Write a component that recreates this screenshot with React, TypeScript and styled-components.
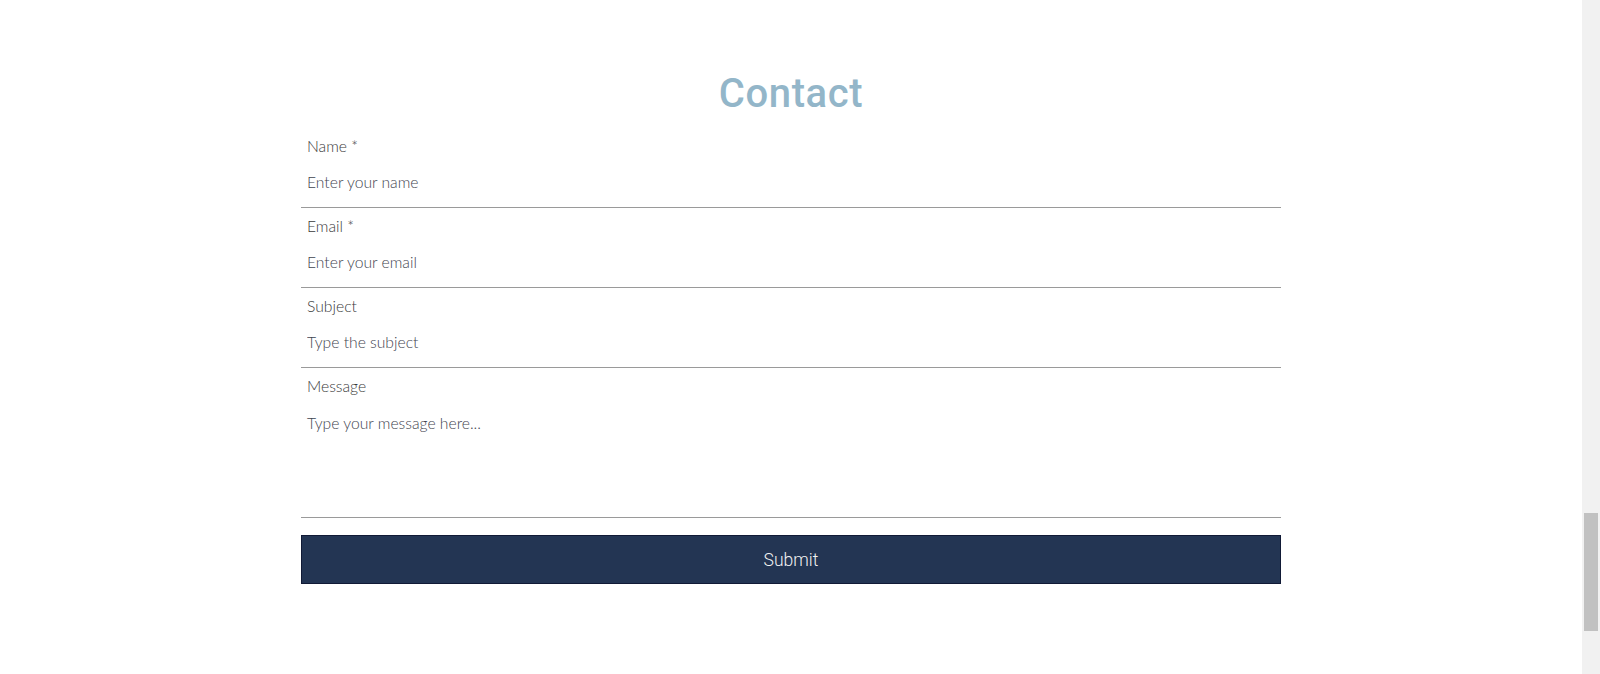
import styled, { createGlobalStyle } from 'styled-components'

const GlobalStyle = createGlobalStyle`
  html, body {
    margin: 0;
    padding: 0;
    background: #ffffff;
    overflow: hidden;
  }
  * {
    box-sizing: border-box;
  }
`

const Page = styled.div`
  display: flex;
  width: 100%;
  height: 674px;
`

const Main = styled.main`
  flex: 1;
  display: flex;
  flex-direction: column;
  align-items: center;
`

const Title = styled.h1`
  margin: 66px 0 0;
  height: 62px;
  font-family: 'Roboto', 'Liberation Sans', sans-serif;
  font-weight: 500;
  font-size: 40px;
  line-height: 56px;
  letter-spacing: 0.6px;
  color: #93b6c9;
`

const Form = styled.form`
  width: 980px;
  display: flex;
  flex-direction: column;
`

const Field = styled.div`
  display: flex;
  flex-direction: column;
  padding-top: 8px;
  border-bottom: 1px solid #9a9a9a;
`

const Label = styled.label`
  font-family: 'Lato', 'Open Sans', sans-serif;
  font-weight: 300;
  font-size: 15.7px;
  line-height: 20px;
  color: #3a3a3a;
  padding-left: 6px;
`

const Input = styled.input`
  height: 51px;
  border: none;
  outline: none;
  padding: 0 6px;
  font-family: 'Lato', 'Open Sans', sans-serif;
  font-weight: 300;
  font-size: 15.7px;
  color: #333;
  background: transparent;

  &::placeholder {
    color: #3f4550;
  }
`

const TextArea = styled.textarea`
  height: 121px;
  border: none;
  outline: none;
  resize: none;
  padding: 17px 6px 0;
  font-family: 'Lato', 'Open Sans', sans-serif;
  font-weight: 300;
  font-size: 15.7px;
  line-height: 20px;
  color: #333;
  background: transparent;

  &::placeholder {
    color: #3f4550;
  }
`

const SubmitButton = styled.button`
  margin-top: 17px;
  height: 49px;
  background-color: #233553;
  border: 1px solid #111a36;
  color: #f2f2f2;
  font-family: 'Roboto', 'Liberation Sans', sans-serif;
  font-weight: 300;
  font-size: 17.5px;
  cursor: pointer;
`

const ScrollTrack = styled.div`
  width: 18px;
  height: 100%;
  background: #f1f1f1;
  display: flex;
  flex-direction: column;
  align-items: center;
`

const ScrollThumb = styled.div`
  margin-top: 513px;
  width: 14px;
  height: 118px;
  background: #c1c1c1;
`

const fields = [
  { label: 'Name *', placeholder: 'Enter your name', type: 'text' },
  { label: 'Email *', placeholder: 'Enter your email', type: 'email' },
  { label: 'Subject', placeholder: 'Type the subject', type: 'text' },
]

function App() {
  return (
    <>
      <GlobalStyle />
      <Page>
        <Main>
          <Title>Contact</Title>
          <Form onSubmit={(e) => e.preventDefault()}>
            {fields.map((f) => (
              <Field key={f.label}>
                <Label>{f.label}</Label>
                <Input type={f.type} placeholder={f.placeholder} />
              </Field>
            ))}
            <Field>
              <Label>Message</Label>
              <TextArea placeholder="Type your message here..." />
            </Field>
            <SubmitButton type="submit">Submit</SubmitButton>
          </Form>
        </Main>
        <ScrollTrack>
          <ScrollThumb />
        </ScrollTrack>
      </Page>
    </>
  )
}

export default App
